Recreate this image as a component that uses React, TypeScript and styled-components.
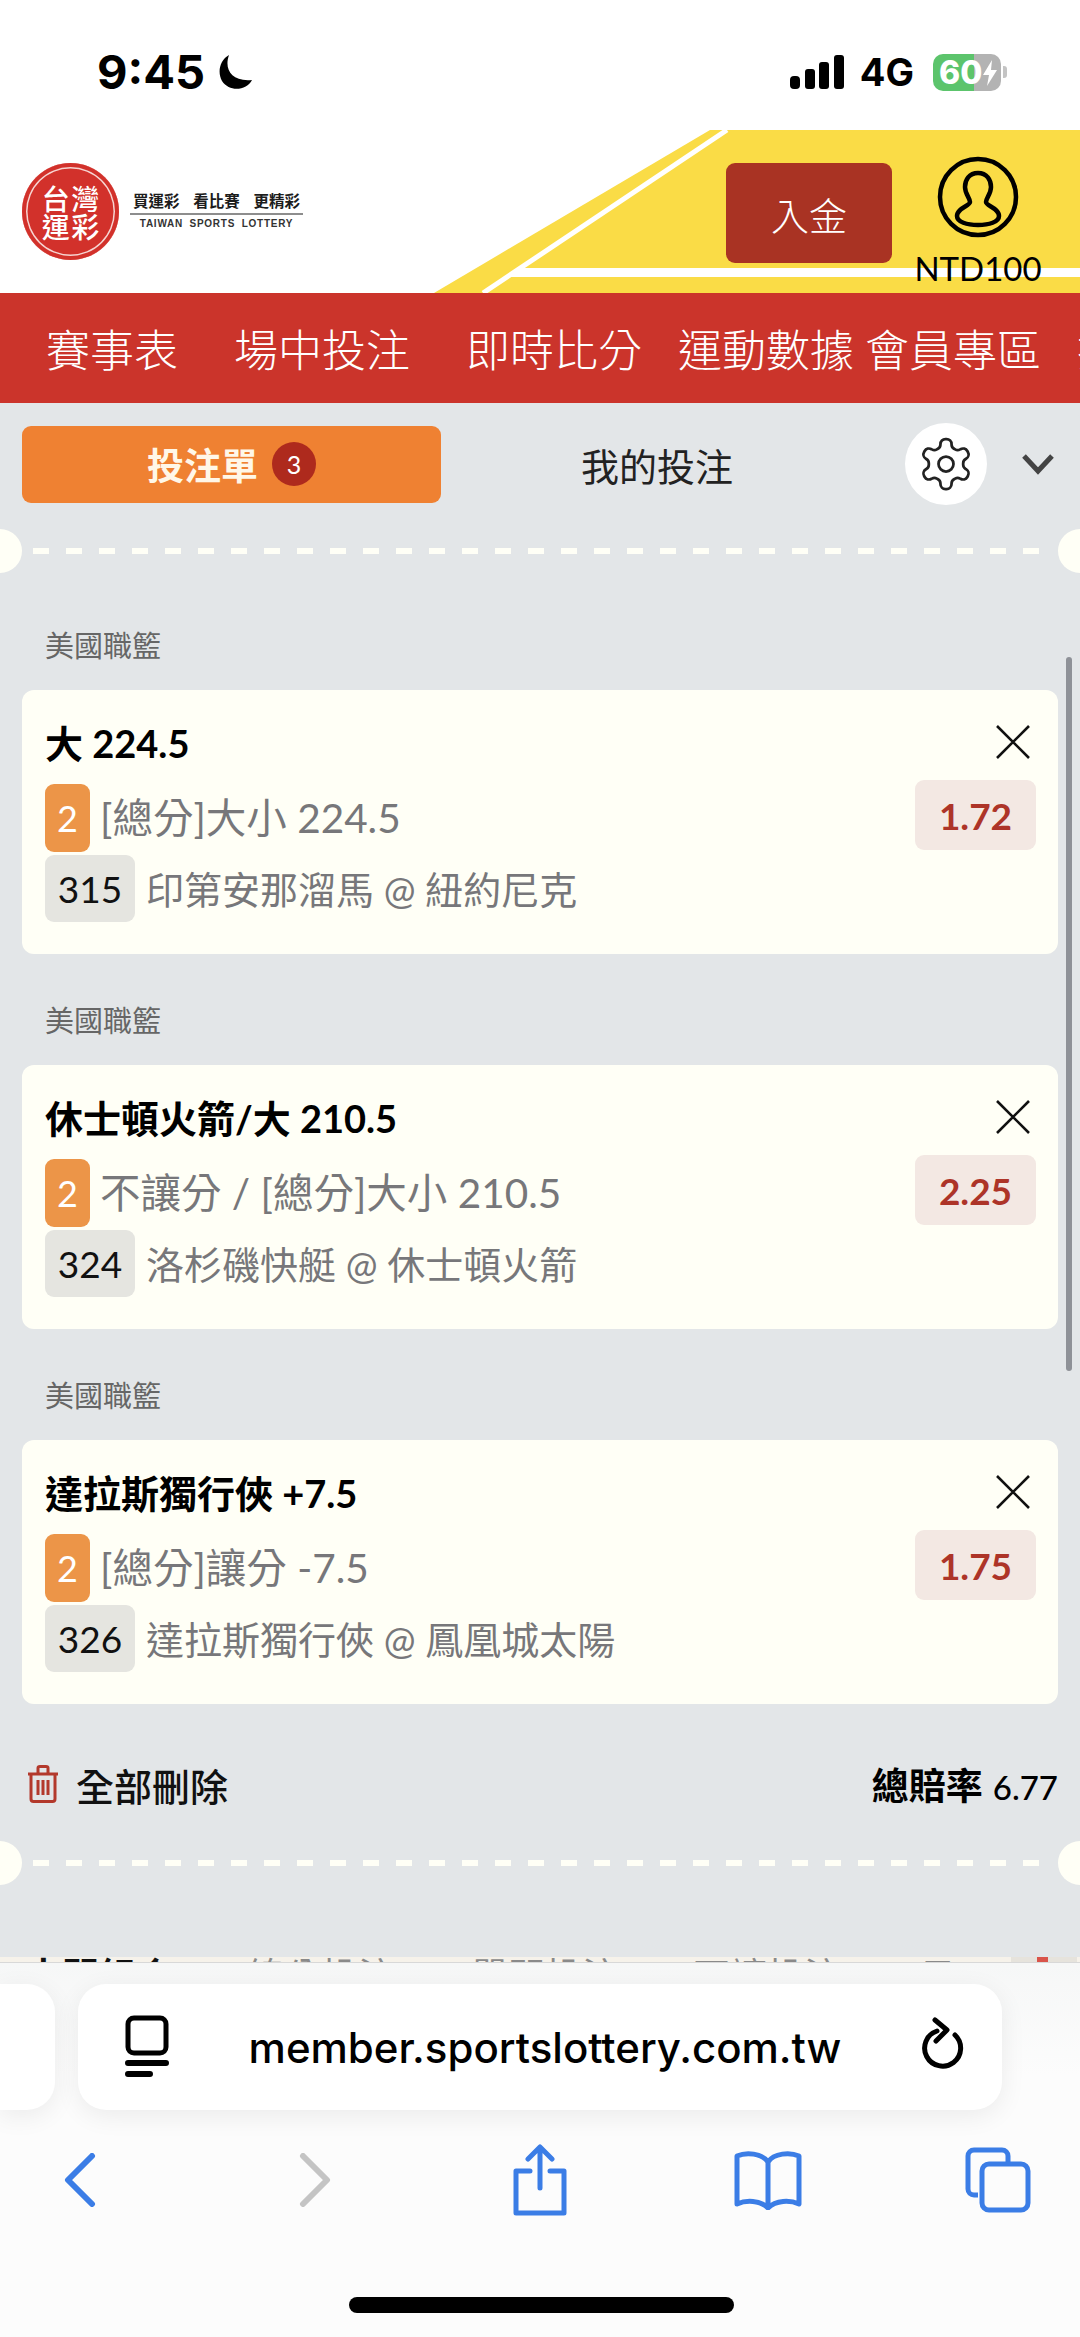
import React, {FC} from "react";
import styled, {createGlobalStyle} from "styled-components";

const CJK = `Lato, "Noto Sans CJK TC", sans-serif`;

const GlobalStyle = createGlobalStyle`
  html, body {
    margin: 0;
    padding: 0;
    background: #fff;
    font-family: ${CJK};
  }
  * { box-sizing: border-box; }
`;

const Page = styled.div`
  position: relative;
  width: 1080px;
  height: 2337px;
  overflow: hidden;
  display: flex;
  flex-direction: column;
  background: #e3e6e8;
`;

const StatusBar = styled.div`
  height: 130px;
  background: #fff;
  display: flex;
  justify-content: space-between;
  align-items: flex-start;
  padding: 46px 73px 0 97px;
`;

const StatusLeft = styled.div`
  display: flex;
  align-items: center;
  gap: 13px;
`;

const Time = styled.span`
  font-family: Inter, sans-serif;
  font-size: 47px;
  font-weight: 700;
  line-height: 52px;
  color: #000;
`;

const StatusRight = styled.div`
  display: flex;
  align-items: center;
  height: 52px;
  gap: 16px;
`;

const NetworkLabel = styled.span`
  font-family: Inter, sans-serif;
  font-size: 38px;
  font-weight: 700;
  color: #000;
`;

const BatteryWrap = styled.div`
  display: flex;
  align-items: center;
  gap: 2px;
  margin-left: 3px;
`;

const BatteryNub = styled.div`
  width: 4px;
  height: 12px;
  border-radius: 0 3px 3px 0;
  background: #c4c4c4;
`;

const Battery = styled.div`
  position: relative;
  width: 68px;
  height: 37px;
  border-radius: 10px;
  overflow: hidden;
  background: linear-gradient(90deg, #5cc46c 0 60%, #b3b3b3 60% 100%);
  display: flex;
  align-items: center;
  padding-left: 6px;
  color: #fff;
  font-family: Inter, sans-serif;
  font-size: 32px;
  font-weight: 800;
`;

const BatteryBolt = styled.svg`
  position: absolute;
  right: 3px;
  top: 6px;
`;

const Header = styled.div`
  position: relative;
  height: 163px;
  background: #fff;
  display: flex;
  justify-content: space-between;
  overflow: hidden;
`;

const HeaderArt = styled.svg`
  position: absolute;
  inset: 0;
`;

const LogoBlock = styled.div`
  position: relative;
  display: flex;
  align-items: center;
  gap: 11px;
  padding: 33px 0 0 22px;
  height: 130px;
`;

const LogoSeal = styled.div`
  width: 97px;
  height: 97px;
  border-radius: 50%;
  background: #d2312b;
  box-shadow: inset 0 0 0 4px #d2312b, inset 0 0 0 5.5px #f6d3d0;
  display: grid;
  grid-template-columns: 1fr 1fr;
  align-content: center;
  justify-items: center;
  padding: 0 19px;
  color: #fff;
  font-family: "Noto Sans CJK TC", sans-serif;
  font-size: 28px;
  font-weight: 500;
  line-height: 28px;
`;

const LogoText = styled.div`
  display: flex;
  flex-direction: column;
  align-items: center;
  width: 173px;
`;

const Slogan = styled.div`
  width: 100%;
  display: flex;
  justify-content: space-between;
  padding: 0 3px 3px;
  font-family: "Noto Sans CJK TC", sans-serif;
  font-size: 15.5px;
  font-weight: 700;
  line-height: 20px;
  color: #1c1c1c;
  border-bottom: 2px solid #8d8d8d;
`;

const LogoEnglish = styled.div`
  font-family: "Liberation Sans", sans-serif;
  font-size: 10px;
  font-weight: 700;
  letter-spacing: 0.75px;
  word-spacing: 3px;
  line-height: 18px;
  color: #333;
`;

const HeaderActions = styled.div`
  position: relative;
  display: flex;
  align-items: flex-start;
  padding: 33px 36px 0 0;
  gap: 20px;
`;

const DepositButton = styled.button`
  width: 166px;
  height: 100px;
  border: 0;
  border-radius: 9px;
  background: #a93323;
  color: #fff;
  font-family: "Noto Sans CJK TC", sans-serif;
  font-size: 38px;
  font-weight: 300;
`;

const Account = styled.div`
  position: relative;
  width: 132px;
  display: flex;
  flex-direction: column;
  align-items: center;
  margin-top: -7px;
`;

const Balance = styled.div`
  font-family: Lato, sans-serif;
  font-size: 33px;
  line-height: 34px;
  color: #000;
  margin-top: 13px;
`;

const NavBar = styled.nav`
  height: 110px;
  background: #cb342b;
  display: flex;
  align-items: center;
  padding-left: 46px;
  overflow: hidden;
  white-space: nowrap;
`;

const NavItem = styled.div<{$gap: number}>`
  flex: none;
  margin-right: ${(p) => p.$gap}px;
  color: #fff;
  font-family: "Noto Sans CJK TC", sans-serif;
  font-size: 44px;
  font-weight: 300;
  line-height: 60px;
`;

const Sheet = styled.div`
  position: relative;
  flex: 1;
  margin-top: 2px;
  background: #e3e6e8;
  border-radius: 18px 18px 0 0;
  display: flex;
  flex-direction: column;
  overflow: hidden;
`;

const Tabs = styled.div`
  display: flex;
  align-items: center;
  height: 82px;
  margin-top: 18px;
  padding: 0 22px;
`;

const ActiveTab = styled.div`
  width: 419px;
  height: 77px;
  border-radius: 9px;
  background: #ef8132;
  color: #fff7e8;
  display: flex;
  align-items: center;
  justify-content: center;
  gap: 14px;
  font-family: "Noto Sans CJK TC", sans-serif;
  font-size: 37px;
  font-weight: 700;
`;

const CountBadge = styled.span`
  width: 44px;
  height: 44px;
  border-radius: 50%;
  background: #ae2a1d;
  color: #fff;
  display: flex;
  align-items: center;
  justify-content: center;
  font-family: Lato, sans-serif;
  font-size: 25px;
  font-weight: 400;
`;

const InactiveTab = styled.div`
  width: 432px;
  text-align: center;
  color: #222;
  font-family: "Noto Sans CJK TC", sans-serif;
  font-size: 38px;
  font-weight: 400;
`;

const SettingsButton = styled.div`
  width: 82px;
  height: 82px;
  border-radius: 50%;
  background: #fff;
  margin-left: 32px;
  display: flex;
  align-items: center;
  justify-content: center;
`;

const Chevron = styled.svg`
  margin-left: 35px;
`;

const Perforation = styled.div<{$top: number}>`
  position: relative;
  height: 44px;
  margin-top: ${(p) => p.$top}px;
  display: flex;
  align-items: center;
  padding: 0 33px;
  &::before, &::after {
    content: "";
    position: absolute;
    top: 0;
    width: 44px;
    height: 44px;
    border-radius: 50%;
    background: #fffff6;
  }
  &::before { left: -22px; }
  &::after { right: -22px; }
`;

const DashLine = styled.div`
  flex: 1;
  height: 6px;
  background: repeating-linear-gradient(90deg, #fffff6 0 16px, transparent 16px 33px);
`;

const BetList = styled.div`
  display: flex;
  flex-direction: column;
  padding: 48px 22px 0;
`;

const BetGroup = styled.section`
  height: 375px;
  display: flex;
  flex-direction: column;
`;

const League = styled.div`
  height: 53px;
  padding: 2px 0 0 23px;
  color: #666;
  font-family: "Noto Sans CJK TC", sans-serif;
  font-size: 29px;
  line-height: 42px;
  font-weight: 400;
`;

const BetCard = styled.div`
  position: relative;
  height: 264px;
  margin-top: 16px;
  border-radius: 12px;
  background: #fffff6;
  padding: 29px 22px 0 23px;
`;

const BetTitle = styled.div`
  font-family: ${CJK};
  font-size: 38px;
  font-weight: 700;
  line-height: 48px;
  color: #000;
`;

const CloseIcon = styled.svg`
  position: absolute;
  top: 34px;
  right: 27px;
`;

const BetLine = styled.div`
  display: flex;
  align-items: center;
  justify-content: space-between;
  margin-top: 17px;
`;

const BetMeta = styled.div`
  display: flex;
  align-items: center;
  gap: 10px;
`;

const MetaText = styled.span<{$size: number}>`
  color: #77777a;
  font-family: ${CJK};
  font-size: ${(p) => p.$size}px;
  font-weight: 400;
  line-height: 50px;
`;

const LegTag = styled.span`
  width: 45px;
  height: 68px;
  border-radius: 9px;
  background: #ec9548;
  color: #fff;
  display: flex;
  align-items: center;
  justify-content: center;
  font-family: Lato, sans-serif;
  font-size: 36px;
`;

const OddsTag = styled.span`
  width: 121px;
  height: 70px;
  margin-top: -6px;
  border-radius: 9px;
  background: #f3e8e3;
  color: #ad3428;
  display: flex;
  align-items: center;
  justify-content: center;
  font-family: Lato, sans-serif;
  font-size: 37px;
  font-weight: 700;
`;

const MatchLine = styled.div`
  display: flex;
  align-items: center;
  gap: 11px;
  margin-top: 3px;
`;

const GameNo = styled.span`
  width: 90px;
  height: 67px;
  border-radius: 9px;
  background: #e5e5e0;
  color: #111;
  display: flex;
  align-items: center;
  justify-content: center;
  font-family: Lato, sans-serif;
  font-size: 37px;
`;

const Summary = styled.div`
  display: flex;
  align-items: center;
  justify-content: space-between;
  height: 60px;
  margin-top: 8px;
  padding: 0 22px 0 27px;
`;

const DeleteAll = styled.div`
  display: flex;
  align-items: center;
  gap: 17px;
  color: #111;
  font-family: "Noto Sans CJK TC", sans-serif;
  font-size: 38px;
  font-weight: 500;
`;

const TotalOdds = styled.div`
  color: #000;
  font-family: ${CJK};
  font-size: 37px;
  font-weight: 700;
`;

const TotalValue = styled.span`
  font-size: 33px;
  font-weight: 500;
  margin-left: 10px;
`;

const Scrollbar = styled.div`
  position: absolute;
  top: 252px;
  right: 8px;
  width: 6px;
  height: 714px;
  border-radius: 3px;
  background: #8e9197;
`;

const ClippedRow = styled.div`
  flex: none;
  margin-top: auto;
  height: 5px;
  background: #f6f2ea;
  overflow: hidden;
  display: flex;
  align-items: flex-start;
  padding-left: 25px;
`;

const ClippedLabel = styled.span<{$gap: number; $strong?: boolean}>`
  flex: none;
  margin-right: ${(p) => p.$gap}px;
  margin-top: -1px;
  color: ${(p) => (p.$strong ? "#111" : "#8a8a8a")};
  font-family: "Noto Sans CJK TC", sans-serif;
  font-size: 37px;
  font-weight: ${(p) => (p.$strong ? 700 : 400)};
  line-height: 37px;
`;

const ClippedMark = styled.span`
  flex: none;
  width: 66px;
  height: 5px;
  background: linear-gradient(90deg, #e6e3dc 0 40%, #d9544a 40% 56%, #e6e3dc 56%);
`;

const BrowserChrome = styled.div`
  flex: none;
  height: 375px;
  background: linear-gradient(180deg, #f6f7f7, #fcfcfc 30%);
  border-top: 1px solid #d8d8d8;
  display: flex;
  flex-direction: column;
`;

const AddressRow = styled.div`
  display: flex;
  gap: 23px;
  margin-top: 21px;
  height: 126px;
`;

const PrevPill = styled.div`
  width: 55px;
  border-radius: 0 28px 28px 0;
  background: #fff;
  box-shadow: 0 6px 26px rgba(0, 0, 0, 0.07);
`;

const AddressPill = styled.div`
  width: 924px;
  border-radius: 28px;
  background: #fff;
  box-shadow: 0 6px 26px rgba(0, 0, 0, 0.07);
  display: flex;
  align-items: center;
  justify-content: space-between;
  padding: 0 37px 0 47px;
`;

const UrlText = styled.span`
  font-family: Inter, sans-serif;
  font-size: 42px;
  font-weight: 500;
  color: #000;
`;

const ToolRow = styled.div`
  display: flex;
  align-items: center;
  height: 72px;
  margin-top: 34px;
`;

const ToolSlot = styled.div<{$left: number}>`
  display: flex;
  margin-left: ${(p) => p.$left}px;
`;

const HomeIndicator = styled.div`
  position: absolute;
  left: 349px;
  bottom: 24px;
  width: 385px;
  height: 16px;
  border-radius: 8px;
  background: #000;
`;

type Bet = {
    title: string;
    market: string;
    odds: string;
    gameNo: string;
    match: string;
};

const bets: Bet[] = [
    {title: "大 224.5", market: "[總分]大小 224.5", odds: "1.72", gameNo: "315", match: "印第安那溜馬 @ 紐約尼克"},
    {title: "休士頓火箭/大 210.5", market: "不讓分 / [總分]大小 210.5", odds: "2.25", gameNo: "324", match: "洛杉磯快艇 @ 休士頓火箭"},
    {title: "達拉斯獨行俠 +7.5", market: "[總分]讓分 -7.5", odds: "1.75", gameNo: "326", match: "達拉斯獨行俠 @ 鳳凰城太陽"},
];

const BLUE = "#3b7de6";

const App: FC = () => (
    <Page>
        <GlobalStyle/>
        <StatusBar>
            <StatusLeft>
                <Time>9:45</Time>
                <svg width="36" height="38" viewBox="0 0 36 38">
                    <path d="M11 2C6 16 13 29 34 27C29 37 12 40 4 28C-1 19 2 7 11 2Z" fill="#000"/>
                </svg>
            </StatusLeft>
            <StatusRight>
                <svg width="54" height="34" viewBox="0 0 54 34">
                    <rect x="0" y="21" width="10" height="13" rx="4" fill="#000"/>
                    <rect x="15" y="14" width="10" height="20" rx="3" fill="#000"/>
                    <rect x="29" y="7" width="10" height="27" rx="3" fill="#000"/>
                    <rect x="44" y="0" width="10" height="34" rx="3" fill="#000"/>
                </svg>
                <NetworkLabel>4G</NetworkLabel>
                <BatteryWrap>
                    <Battery>
                        60
                        <BatteryBolt width="16" height="26" viewBox="0 0 16 26">
                            <path d="M10 0L1 15H7L5 26L15 10H9Z" fill="#fff"/>
                        </BatteryBolt>
                    </Battery>
                    <BatteryNub/>
                </BatteryWrap>
            </StatusRight>
        </StatusBar>
        <Header>
            <HeaderArt width="1080" height="163" viewBox="0 0 1080 163">
                <path d="M434 163L710 0H1080V163Z" fill="#fadc46"/>
                <path d="M483 163L727 0" stroke="#fff" strokeWidth="5" fill="none"/>
                <path d="M522 138H1080V147H508Z" fill="#fff"/>
            </HeaderArt>
            <LogoBlock>
                <LogoSeal>
                    <span>台</span><span>灣</span><span>運</span><span>彩</span>
                </LogoSeal>
                <LogoText>
                    <Slogan><span>買運彩</span><span>看比賽</span><span>更精彩</span></Slogan>
                    <LogoEnglish>TAIWAN SPORTS LOTTERY</LogoEnglish>
                </LogoText>
            </LogoBlock>
            <HeaderActions>
                <DepositButton>入金</DepositButton>
                <Account>
                    <svg width="82" height="82" viewBox="0 0 82 82" fill="none" stroke="#000" strokeWidth="4.5">
                        <circle cx="41" cy="41" r="38"/>
                        <path d="M41 17C32 17 28 24 28 31C28 38 33 42 33 46C33 50 20 52 20 60C20 66 30 69 41 69C52 69 62 66 62 60C62 52 49 50 49 46C49 42 54 38 54 31C54 24 50 17 41 17Z"/>
                    </svg>
                    <Balance>NTD100</Balance>
                </Account>
            </HeaderActions>
        </Header>
        <NavBar>
            <NavItem $gap={56}>賽事表</NavItem>
            <NavItem $gap={56}>場中投注</NavItem>
            <NavItem $gap={36}>即時比分</NavItem>
            <NavItem $gap={11}>運動數據</NavItem>
            <NavItem $gap={36}>會員專區</NavItem>
            <NavItem $gap={0}>投注</NavItem>
        </NavBar>
        <Sheet>
            <Tabs>
                <ActiveTab>投注單<CountBadge>3</CountBadge></ActiveTab>
                <InactiveTab>我的投注</InactiveTab>
                <SettingsButton>
                    <svg width="60" height="60" viewBox="0 0 24 24" fill="none" stroke="#222" strokeWidth="1.1" strokeLinejoin="round">
                        <path d="M12.22 2h-.44a2 2 0 0 0-2 2v.18a2 2 0 0 1-1 1.73l-.43.25a2 2 0 0 1-2 0l-.15-.08a2 2 0 0 0-2.73.73l-.22.38a2 2 0 0 0 .73 2.73l.15.1a2 2 0 0 1 1 1.72v.51a2 2 0 0 1-1 1.74l-.15.09a2 2 0 0 0-.73 2.73l.22.38a2 2 0 0 0 2.73.73l.15-.08a2 2 0 0 1 2 0l.43.25a2 2 0 0 1 1 1.73V20a2 2 0 0 0 2 2h.44a2 2 0 0 0 2-2v-.18a2 2 0 0 1 1-1.73l.43-.25a2 2 0 0 1 2 0l.15.08a2 2 0 0 0 2.73-.73l.22-.39a2 2 0 0 0-.73-2.73l-.15-.08a2 2 0 0 1-1-1.74v-.5a2 2 0 0 1 1-1.74l.15-.09a2 2 0 0 0 .73-2.73l-.22-.38a2 2 0 0 0-2.73-.73l-.15.08a2 2 0 0 1-2 0l-.43-.25a2 2 0 0 1-1-1.73V4a2 2 0 0 0-2-2z"/>
                        <circle cx="12" cy="12" r="3"/>
                    </svg>
                </SettingsButton>
                <Chevron width="32" height="22" viewBox="0 0 32 22" fill="none" stroke="#444" strokeWidth="5">
                    <path d="M2 3L16 18L30 3"/>
                </Chevron>
            </Tabs>
            <Perforation $top={24}><DashLine/></Perforation>
            <BetList>
                {bets.map((bet) => (
                    <BetGroup key={bet.gameNo}>
                        <League>美國職籃</League>
                        <BetCard>
                            <BetTitle>{bet.title}</BetTitle>
                            <CloseIcon width="36" height="36" viewBox="0 0 36 36" stroke="#111" strokeWidth="2.6">
                                <path d="M2 2L34 34M34 2L2 34"/>
                            </CloseIcon>
                            <BetLine>
                                <BetMeta>
                                    <LegTag>2</LegTag>
                                    <MetaText $size={40.5}>{bet.market}</MetaText>
                                </BetMeta>
                                <OddsTag>{bet.odds}</OddsTag>
                            </BetLine>
                            <MatchLine>
                                <GameNo>{bet.gameNo}</GameNo>
                                <MetaText $size={38}>{bet.match}</MetaText>
                            </MatchLine>
                        </BetCard>
                    </BetGroup>
                ))}
            </BetList>
            <Summary>
                <DeleteAll>
                    <svg width="32" height="38" viewBox="0 0 32 38" fill="none" stroke="#b3392c" strokeWidth="3" strokeLinejoin="round">
                        <path d="M1 9H31M11 9V3C11 2 12 1.500 13 1.500H19C20 1.500 21 2 21 3V9M4 9V34C4 35.500 5 36.500 6.500 36.500H25.500C27 36.500 28 35.500 28 34V9M11 15V30M16 15V30M21 15V30"/>
                    </svg>
                    全部刪除
                </DeleteAll>
                <TotalOdds>總賠率<TotalValue>6.77</TotalValue></TotalOdds>
            </Summary>
            <Perforation $top={27}><DashLine/></Perforation>
            <ClippedRow>
                <ClippedLabel $gap={74} $strong>串關組合</ClippedLabel>
                <ClippedLabel $gap={76}>總分投注</ClippedLabel>
                <ClippedLabel $gap={74}>單關投注</ClippedLabel>
                <ClippedLabel $gap={78}>不讓投注</ClippedLabel>
                <ClippedLabel $gap={55}>日</ClippedLabel>
                <ClippedMark/>
            </ClippedRow>
            <Scrollbar/>
        </Sheet>
        <BrowserChrome>
            <AddressRow>
                <PrevPill/>
                <AddressPill>
                    <svg width="44" height="84" viewBox="0 0 44 84" fill="none" stroke="#000" strokeWidth="5" strokeLinecap="round">
                        <rect x="3" y="13" width="38" height="35" rx="6"/>
                        <path d="M3 58H41M3 69H25" strokeWidth="6"/>
                    </svg>
                    <UrlText>member.sportslottery.com.tw</UrlText>
                    <svg width="44" height="60" viewBox="0 0 44 60" fill="none" stroke="#000" strokeWidth="5" strokeLinecap="round" strokeLinejoin="round">
                        <path d="M16 14A18 18 0 1 0 34 18M14 3L26 13L15 24"/>
                    </svg>
                </AddressPill>
            </AddressRow>
            <ToolRow>
                <ToolSlot $left={63}>
                    <svg width="34" height="54" viewBox="0 0 34 54" fill="none" stroke={BLUE} strokeWidth="6" strokeLinecap="round" strokeLinejoin="round">
                        <path d="M29 3L5 27L29 51"/>
                    </svg>
                </ToolSlot>
                <ToolSlot $left={201}>
                    <svg width="34" height="54" viewBox="0 0 34 54" fill="none" stroke="#c4c4c4" strokeWidth="6" strokeLinecap="round" strokeLinejoin="round">
                        <path d="M5 3L29 27L5 51"/>
                    </svg>
                </ToolSlot>
                <ToolSlot $left={181}>
                    <svg width="54" height="72" viewBox="0 0 54 72" fill="none" stroke={BLUE} strokeWidth="5" strokeLinecap="round" strokeLinejoin="round">
                        <path d="M27 44V4M15 15L27 3L39 15M17 27H3V69H51V27H37"/>
                    </svg>
                </ToolSlot>
                <ToolSlot $left={167}>
                    <svg width="68" height="60" viewBox="0 0 68 60" fill="none" stroke={BLUE} strokeWidth="5" strokeLinejoin="round">
                        <path d="M34 12C28 3 12 2 3 6V54C12 50 26 50 34 58C42 50 56 50 65 54V6C56 2 40 3 34 12ZM34 12V56"/>
                    </svg>
                </ToolSlot>
                <ToolSlot $left={163}>
                    <svg width="66" height="66" viewBox="0 0 66 66" fill="none" stroke={BLUE} strokeWidth="5" strokeLinejoin="round">
                        <path d="M13 48H9A6 6 0 0 1 3 42V9A6 6 0 0 1 9 3H37A6 6 0 0 1 43 9V15"/>
                        <rect x="17" y="17" width="46" height="46" rx="7"/>
                    </svg>
                </ToolSlot>
            </ToolRow>
        </BrowserChrome>
        <HomeIndicator/>
    </Page>
);

export default App;
